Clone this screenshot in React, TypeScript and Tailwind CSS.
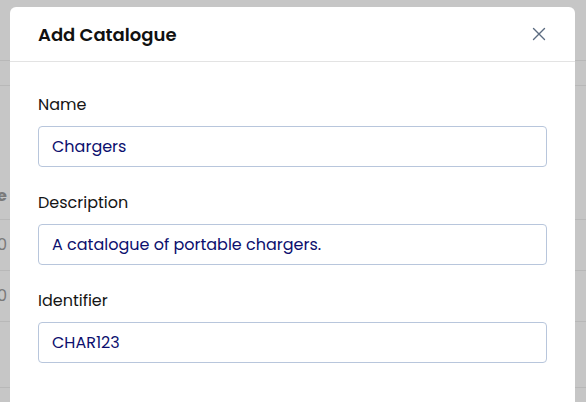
import React from 'react';

const fields = [
  { label: 'Name', value: 'Chargers' },
  { label: 'Description', value: 'A catalogue of portable chargers.' },
  { label: 'Identifier', value: 'CHAR123' },
];

const Backdrop = () => {
  return (
    <div className="flex flex-col w-full h-full">
      <div className="h-[61px] border-b border-[#b8b8b8]" />
      <div className="h-[25px] border-b border-[#b8b8b8]" />
      <div className="h-[134px] border-b border-[#b8b8b8] flex items-end pb-[13px]">
        <span className="text-[16px] leading-[20px] font-bold text-[#7a7a7a] -ml-[3px]">e</span>
      </div>
      <div className="h-[51px] border-b border-[#b8b8b8] flex items-center">
        <span className="text-[16px] text-[#7a7a7a] -ml-[3px]">0</span>
      </div>
      <div className="h-[51px] border-b border-[#b8b8b8] flex items-center">
        <span className="text-[16px] text-[#7a7a7a] -ml-[3px]">0</span>
      </div>
      <div className="h-[66px] border-b border-[#b8b8b8]" />
    </div>
  );
};

const CloseIcon = () => (
  <svg width="14" height="14" viewBox="0 0 14 14" fill="none">
    <path d="M1.5 1.5L12.5 12.5M12.5 1.5L1.5 12.5" stroke="#5b6b80" strokeWidth="1.4" strokeLinecap="round" />
  </svg>
);

const App = () => {
  return (
    <div
      className="relative w-[586px] h-[402px] overflow-hidden bg-[#c6c6c6]"
      style={{ fontFamily: 'Poppins, Inter, "Noto Sans", sans-serif' }}
    >
      <Backdrop />

      <div className="absolute left-[10px] top-[7px] w-[565px] h-[420px] bg-white rounded-[6px]">
        <div className="h-[55px] flex items-center justify-between pl-[28px] pr-[29px] border-b border-[#e3e3e3]">
          <h2 className="text-[18px] font-semibold text-[#111111] pt-[1px]">Add Catalogue</h2>
          <button className="p-0 flex items-center">
            <CloseIcon />
          </button>
        </div>

        <div className="px-[28px] pt-[31px] flex flex-col gap-[24px]">
          {fields.map((f) => (
            <div key={f.label} className="flex flex-col gap-[9px]">
              <label className="text-[16px] leading-[24px] text-[#151515]">{f.label}</label>
              <div className="h-[41px] border border-[#b8c6dc] rounded-[4px] flex items-center pl-[13px]">
                <span className="text-[16px] text-[#0c0f6e]">{f.value}</span>
              </div>
            </div>
          ))}
        </div>
      </div>
    </div>
  );
};

export default App;
